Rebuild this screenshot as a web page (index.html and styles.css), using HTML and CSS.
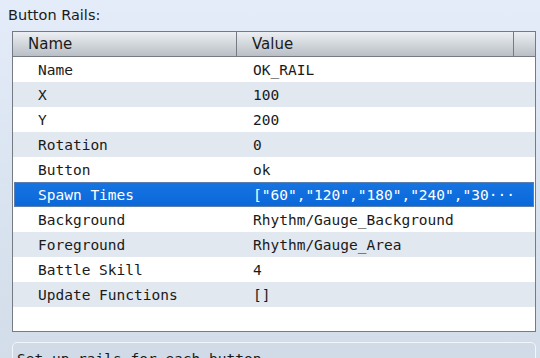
FILE: index.html
```html
<!DOCTYPE html>
<html lang="en">
<head>
    <meta charset="UTF-8">
    <title>Button Rails</title>
    <link rel="stylesheet" href="styles.css">
</head>
<body>
    <div class="label">Button Rails:</div>

    <!-- Tabela de propriedades -->
    <div class="props">
        <div class="props-header">
            <div class="col-name">Name</div>
            <div class="col-value">Value</div>
            <div class="col-spare"></div>
        </div>
        <div class="props-body">
            <div class="row"><span>Name</span><span>OK_RAIL</span></div>
            <div class="row alt"><span>X</span><span>100</span></div>
            <div class="row"><span>Y</span><span>200</span></div>
            <div class="row alt"><span>Rotation</span><span>0</span></div>
            <div class="row"><span>Button</span><span>ok</span></div>
            <div class="row selected"><span>Spawn Times</span><span>["60","120","180","240","30···</span></div>
            <div class="row"><span>Background</span><span>Rhythm/Gauge_Background</span></div>
            <div class="row alt"><span>Foreground</span><span>Rhythm/Gauge_Area</span></div>
            <div class="row"><span>Battle Skill</span><span>4</span></div>
            <div class="row alt"><span>Update Functions</span><span>[]</span></div>
        </div>
    </div>

    <!-- Descrição -->
    <div class="help">Set up rails for each button.</div>
</body>
</html>
```

FILE: styles.css
```css
html, body {
    overflow: hidden;
}

body {
    margin: 0;
    height: 358px;
    background: linear-gradient(#e3ecf8, #d2dde9);
    font-family: "DejaVu Sans", sans-serif;
    color: #1a1a1a;
}

.label {
    font-size: 14.5px;
    padding: 7px 0 0 8px;
    height: 31px;
    box-sizing: border-box;
}

/* Tabela */
.props {
    margin-left: 12px;
    width: 524px;
    height: 301px;
    box-sizing: border-box;
    border: 1px solid #767b83;
    background-color: #ffffff;
}

.props-header {
    display: grid;
    grid-template-columns: 224px 277px 1fr;
    height: 25px;
    box-sizing: border-box;
    border-bottom: 1px solid #767b83;
    background: linear-gradient(#eceff3, #b9bfc6);
    font-size: 15px;
}

.props-header div {
    border-right: 1px solid #767b83;
    line-height: 25px;
}

.props-header .col-spare {
    border-right: none;
}

.col-name {
    padding-left: 15px;
}

.col-value {
    padding-left: 15px;
}

.row {
    display: grid;
    grid-template-columns: 240px 1fr;
    height: 25px;
    padding-top: 2px;
    line-height: 23px;
    font-family: "DejaVu Sans Mono", monospace;
    font-size: 14.5px;
    box-sizing: border-box;
}

.row span:first-child {
    padding-left: 25px;
}

.row.alt {
    background-color: #e2e8f0;
}

.row.selected {
    margin: 0 1px;
    grid-template-columns: 238px 1fr;
    background: linear-gradient(#1673e2, #0a68d8);
    border: 1px solid #5b80b0;
    padding-top: 1px;
    line-height: 22px;
    color: #ffffff;
}

.row.selected span:first-child {
    padding-left: 23px;
}

/* Painel inferior */
.help {
    margin: 10px 0 0 12px;
    width: 524px;
    height: 24px;
    box-sizing: border-box;
    border: 1px solid #f2f6fb;
    border-radius: 5px;
    background-color: #d0dbe7;
    font-family: "DejaVu Sans Mono", monospace;
    font-size: 14.5px;
    padding: 8px 0 0 4px;
}
```
